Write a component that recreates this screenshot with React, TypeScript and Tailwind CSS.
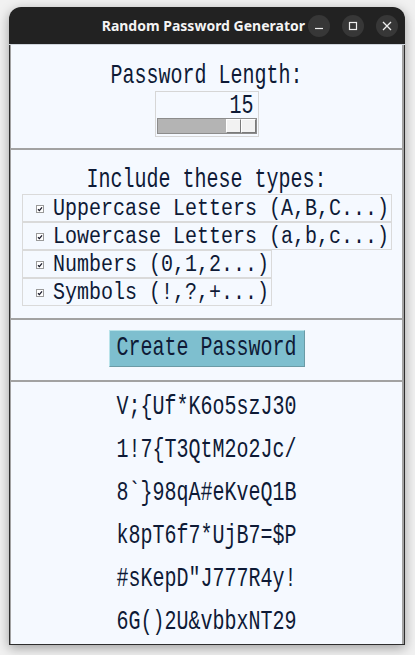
import React from 'react'

const passwords = [
  'V;{Uf*K6o5szJ30',
  '1!7{T3QtM2o2Jc/',
  '8`}98qA#eKveQ1B',
  'k8pT6f7*UjB7=$P',
  '#sKepD"J777R4y!',
  '6G()2U&vbbxNT29',
]

const types = [
  'Uppercase Letters (A,B,C...)',
  'Lowercase Letters (a,b,c...)',
  'Numbers (0,1,2...)',
  'Symbols (!,?,+...)',
]

// tall narrow mono text, like the Tk font in the shot
function T({ children, tight }: { children: React.ReactNode; tight?: boolean }) {
  return (
    <span className="flex h-[26px] items-center">
      <span className={tight ? 'inline-block whitespace-pre scale-y-[1.23] leading-[20px]' : 'inline-block whitespace-pre scale-y-[1.38] leading-[20px]'}>
        {children}
      </span>
    </span>
  )
}

function Check() {
  return (
    <svg width="8" height="8" viewBox="0 0 8 8" className="shrink-0">
      <rect x="0.5" y="0.5" width="7" height="7" fill="#ffffff" stroke="#9a9a9a" />
      <path d="M2 4.2 L3.4 5.6 L6 2.4" fill="none" stroke="#1a1a2a" strokeWidth="1.3" />
    </svg>
  )
}

export default function App() {
  return (
    <div className="h-[655px] w-[415px] overflow-hidden bg-[#f1f1f1] pl-[9px] pt-[7px]">
      <div className="flex w-[396px] flex-col shadow-[0_3px_12px_rgba(0,0,0,0.35)] rounded-t-[12px]">
        {/* title bar */}
        <div className="flex h-[38px] items-center justify-end rounded-t-[12px] border-b border-[#cfd5dc] bg-[#222222] pr-[7px]">
          <span className="mr-[3px] font-['Noto_Sans',sans-serif] text-[14px] font-bold text-[#f4f4f4]">
            Random Password Generator
          </span>
          <div className="flex gap-[12px]">
            <div className="flex h-[22px] w-[22px] items-center justify-center rounded-full bg-[#373737]">
              <svg width="10" height="10" viewBox="0 0 10 10">
                <path d="M1 7.5 H9" stroke="#eeeeee" strokeWidth="1.2" />
              </svg>
            </div>
            <div className="flex h-[22px] w-[22px] items-center justify-center rounded-full bg-[#373737]">
              <svg width="10" height="10" viewBox="0 0 10 10">
                <rect x="1.5" y="1.5" width="7" height="7" fill="none" stroke="#eeeeee" strokeWidth="1.2" />
              </svg>
            </div>
            <div className="flex h-[22px] w-[22px] items-center justify-center rounded-full bg-[#373737]">
              <svg width="10" height="10" viewBox="0 0 10 10">
                <path d="M1 1 L9 9 M9 1 L1 9" stroke="#eeeeee" strokeWidth="1.3" />
              </svg>
            </div>
          </div>
        </div>

        {/* window body */}
        <div className="border-x border-b border-[#2e2e2e] bg-[#f5f9ff] font-['Liberation_Mono',monospace] text-[20px] text-[#0e1a36]">
          <div className="flex flex-col border-l border-r-2 border-[#a2a2a2]">
            {/* length */}
            <section className="flex h-[103px] flex-col items-center pt-[18px]">
              <T>Password Length:</T>
              <div className="mt-[2px] flex w-[104px] flex-col border border-[#d6d6d6] px-[1px] pb-[2px]">
                <div className="flex h-[26px] justify-end pr-[3px] pt-[1px]">
                  <T>15</T>
                </div>
                <div className="flex h-[16px] border border-[#8c8c8c] bg-[#b4b4b4]">
                  <div className="flex-1" />
                  <div className="flex w-[30px]">
                    <div className="w-[15px] border border-t-[#ffffff] border-l-[#ffffff] border-b-[#7a7a7a] border-r-[#7a7a7a] bg-[#f2f2f2]" />
                    <div className="w-[15px] border border-t-[#ffffff] border-l-[#ffffff] border-b-[#7a7a7a] border-r-[#7a7a7a] bg-[#f2f2f2]" />
                  </div>
                </div>
              </div>
            </section>

            {/* types */}
            <section className="flex h-[170px] flex-col border-t-2 border-[#a2a2a2] pt-[17px]">
              <div className="flex justify-center">
                <T>Include these types:</T>
              </div>
              <div className="mt-[1px] flex flex-col items-start pl-[11px]">
                {types.map((t) => (
                  <label key={t} className="flex h-[28px] items-center border border-[#dadada] pl-[13px] pr-[2px] pt-[1px]">
                    <Check />
                    <span className="ml-[9px]">
                      <T tight>{t}</T>
                    </span>
                  </label>
                ))}
              </div>
            </section>

            {/* button */}
            <section className="flex h-[62px] items-start justify-center border-t-2 border-[#a2a2a2] pt-[10px]">
              <button className="flex h-[37px] w-[196px] items-center justify-center border border-t-[#b9e3ea] border-l-[#b9e3ea] border-b-[#6b9ba6] border-r-[#6b9ba6] bg-[#7ebfcf] pb-[1px]">
                <T>Create Password</T>
              </button>
            </section>

            {/* output */}
            <section className="flex h-[264px] flex-col border-t-2 border-[#a2a2a2] pt-[3px]">
              {passwords.map((p) => (
                <div key={p} className="flex h-[43.6px] items-center justify-center">
                  <T>{p}</T>
                </div>
              ))}
            </section>
          </div>
        </div>
      </div>
    </div>
  )
}
